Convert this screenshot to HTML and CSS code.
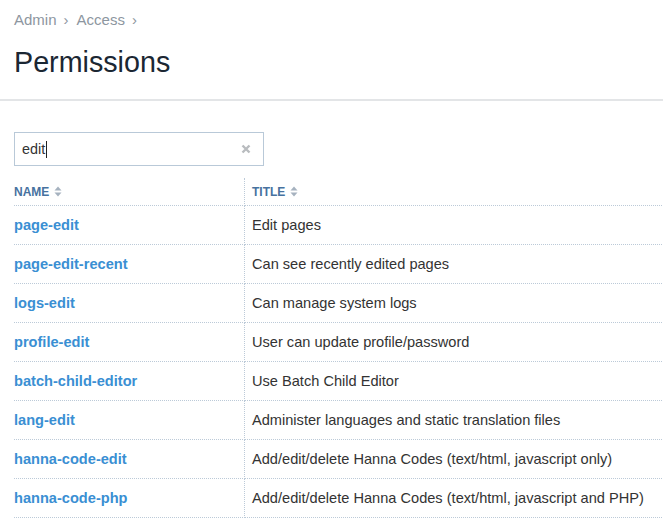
FILE: index.html
```html
<!DOCTYPE html>
<html>
<head>
<meta charset="utf-8">
<link rel="stylesheet" href="styles.css">
</head>
<body>
<header class="page-head">
  <nav class="crumbs"><span>Admin</span><span class="sep">›</span><span>Access</span><span class="sep">›</span></nav>
  <h1 class="title">Permissions</h1>
</header>
<main class="content">
  <div class="search">
    <span class="search-text">edit</span><span class="caret"></span>
    <svg class="clear" width="10" height="10" viewBox="0 0 10 10"><path d="M1.5 1.5 L8.5 8.5 M8.5 1.5 L1.5 8.5" stroke="#b9bcbf" stroke-width="2.4"/></svg>
  </div>
  <table class="perms">
    <thead>
      <tr><th class="c1">NAME <svg class="sort" width="8" height="11" viewBox="0 0 8 11"><path d="M4 0.5 L7.5 4.5 L0.5 4.5 Z M4 10.5 L7.5 6.5 L0.5 6.5 Z" fill="#a6b2bf"/></svg></th><th class="c2">TITLE <svg class="sort" width="8" height="11" viewBox="0 0 8 11"><path d="M4 0.5 L7.5 4.5 L0.5 4.5 Z M4 10.5 L7.5 6.5 L0.5 6.5 Z" fill="#a6b2bf"/></svg></th></tr>
    </thead>
    <tbody>
      <tr><td class="c1"><a>page-edit</a></td><td class="c2">Edit pages</td></tr>
      <tr><td class="c1"><a>page-edit-recent</a></td><td class="c2">Can see recently edited pages</td></tr>
      <tr><td class="c1"><a>logs-edit</a></td><td class="c2">Can manage system logs</td></tr>
      <tr><td class="c1"><a>profile-edit</a></td><td class="c2">User can update profile/password</td></tr>
      <tr><td class="c1"><a>batch-child-editor</a></td><td class="c2">Use Batch Child Editor</td></tr>
      <tr><td class="c1"><a>lang-edit</a></td><td class="c2">Administer languages and static translation files</td></tr>
      <tr><td class="c1"><a>hanna-code-edit</a></td><td class="c2">Add/edit/delete Hanna Codes (text/html, javascript only)</td></tr>
      <tr><td class="c1"><a>hanna-code-php</a></td><td class="c2">Add/edit/delete Hanna Codes (text/html, javascript and PHP)</td></tr>
    </tbody>
  </table>
</main>
</body>
</html>
```
FILE: styles.css
```css
html, body {
  margin: 0;
  padding: 0;
  background: #fff;
  font-family: "Liberation Sans", Arial, sans-serif;
  overflow: hidden;
}
.page-head {
  padding: 10px 14px 0;
  height: 89px;
  border-bottom: 2px solid #e3e5e7;
}
.crumbs {
  font-size: 15px;
  color: #8d96a0;
  line-height: 19px;
  display: flex;
  gap: 7px;
}
.crumbs .sep { margin-right: 1px; }
.title {
  margin: 16px 0 0;
  font-weight: normal;
  font-size: 28.7px;
  line-height: 34px;
  color: #1b2733;
}
.content {
  padding: 31px 14px 0;
}
.search {
  height: 32px;
  border: 1px solid #b9c9d8;
  display: flex;
  align-items: center;
  padding: 0 0 0 7px;
  box-sizing: content-box;
  width: 241px;
  font-size: 14.4px;
  color: #333;
}
.caret {
  display: inline-block;
  width: 1px;
  height: 17px;
  background: #222;
  margin-left: 1px;
}
.clear {
  margin-left: auto;
  margin-right: 12px;
}
.perms {
  margin-top: 12px;
  border-collapse: collapse;
  width: 660px;
  font-size: 14.6px;
}
.perms th {
  text-align: left;
  font-size: 12px;
  font-weight: bold;
  color: #47729f;
  height: 26px;
  padding: 1px 0 0;
  vertical-align: middle;
  border-bottom: 1px dotted #bccad8;
}
.perms th.c2, .perms td.c2 { padding-left: 7px; }
.perms .c1 {
  width: 230px;
  border-right: 1px dotted #bccad8;
  padding-left: 0;
}
.sort { vertical-align: -1px; margin-left: 1px; }
.perms td {
  height: 39px;
  padding-top: 0;
  padding-bottom: 0;
  box-sizing: border-box;
  border-bottom: 1px dotted #bccad8;
  vertical-align: middle;
  color: #333;
}
.perms a {
  color: #3a8fd3;
  font-weight: bold;
  text-decoration: none;
}
```
